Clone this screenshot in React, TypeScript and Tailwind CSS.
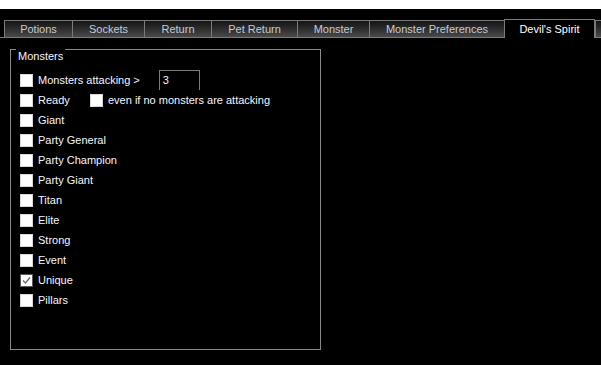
import React from "react";

const tabs = [
  { label: "Potions", w: 68 },
  { label: "Sockets", w: 72 },
  { label: "Return", w: 67 },
  { label: "Pet Return", w: 86 },
  { label: "Monster", w: 72 },
  { label: "Monster Preferences", w: 135 },
];

function Box({ checked = false }: { checked?: boolean }) {
  if (checked) {
    return (
      <span className="flex w-[13px] h-[13px] shrink-0 items-center justify-center border border-[#5a5a5a] bg-white">
        <svg width="9" height="9" viewBox="0 0 9 9">
          <path d="M1 4.5 L3.5 7 L8 1.5" fill="none" stroke="#6a6a6a" strokeWidth="1.3" />
        </svg>
      </span>
    );
  }
  return <span className="block w-[13px] h-[13px] shrink-0 bg-white border border-[#d8d8d8]" />;
}

function Row({ label, checked }: { label: string; checked?: boolean }) {
  return (
    <div className="flex h-[20px] items-center">
      <Box checked={checked} />
      <span className="ml-[5px] text-[#f4f6ff]">{label}</span>
    </div>
  );
}

export default function App() {
  return (
    <div
      className="w-[601px] h-[365px] bg-black overflow-hidden text-[11px] leading-none"
      style={{ fontFamily: '"Liberation Sans", Arial, sans-serif' }}
    >
      <div className="h-[9px] bg-white" />
      <div className="flex items-end h-[29px] pt-[10px]">
        <div className="w-[4px] h-[1px] shrink-0 border-b border-[#7a7a7a]" />
        {tabs.map((t) => (
          <div
            key={t.label}
            className="flex h-[18px] shrink-0 items-center justify-center border-l border-t border-b border-[#7a7a7a] bg-gradient-to-b from-[#141414] to-[#4a4a4a] text-[#c3cad8]"
            style={{ width: t.w }}
          >
            {t.label}
          </div>
        ))}
        <div className="flex h-[19px] w-[91px] shrink-0 items-center justify-center border-l border-t border-r border-[#7a7a7a] bg-black text-white">
          Devil's Spirit
        </div>
        <div className="h-[18px] w-[30px] shrink-0 border-l border-t border-b border-[#7a7a7a] bg-gradient-to-b from-[#141414] to-[#4a4a4a]" />
      </div>
      <div className="pl-[10px] pt-[11px]">
        <div className="relative w-[311px] h-[301px] border border-[#8a8a8a] pl-[9px] pt-[20px]">
          <span className="absolute left-[5px] top-[-1px] bg-black px-[2px] pt-[2px] text-[#f4f6ff]">
            Monsters
          </span>
          <div className="flex h-[20px] items-center">
            <Box />
            <span className="ml-[5px] text-[#f4f6ff]">Monsters attacking &gt;</span>
            <div className="ml-[19px] -mt-[1px] h-[20px] w-[41px] border-l border-t border-r border-[#7a7a7a] pl-[3px] pt-[4px] text-[#f4f6ff]">
              3
            </div>
          </div>
          <div className="flex h-[20px] items-center">
            <Box />
            <span className="ml-[5px] w-[52px] text-[#f4f6ff]">Ready</span>
            <Box />
            <span className="ml-[5px] text-[#f4f6ff]">even if no monsters are attacking</span>
          </div>
          <Row label="Giant" />
          <Row label="Party General" />
          <Row label="Party Champion" />
          <Row label="Party Giant" />
          <Row label="Titan" />
          <Row label="Elite" />
          <Row label="Strong" />
          <Row label="Event" />
          <Row label="Unique" checked />
          <Row label="Pillars" />
        </div>
      </div>
    </div>
  );
}
